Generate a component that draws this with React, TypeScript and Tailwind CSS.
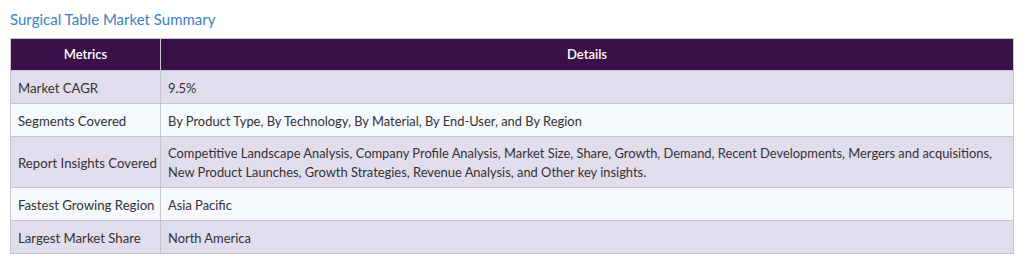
const rows: { metric: string; details: string; tall?: boolean }[] = [
  { metric: "Market CAGR", details: "9.5%" },
  {
    metric: "Segments Covered",
    details: "By Product Type, By Technology, By Material, By End-User, and By Region",
  },
  {
    metric: "Report Insights Covered",
    details:
      "Competitive Landscape Analysis, Company Profile Analysis, Market Size, Share, Growth, Demand, Recent Developments, Mergers and acquisitions, New Product Launches, Growth Strategies, Revenue Analysis, and Other key insights.",
    tall: true,
  },
  { metric: "Fastest Growing Region", details: "Asia Pacific" },
  { metric: "Largest Market Share", details: "North America" },
];

export default function App() {
  return (
    <div
      className="h-[266px] w-[1024px] bg-white px-[10px] pt-[9px]"
      style={{ fontFamily: "Lato, 'Open Sans', sans-serif" }}
    >
      <h2 className="mb-[9px] text-[15px] leading-[20px] text-[#3b80be]">
        Surgical Table Market Summary
      </h2>
      <table className="w-[1004px] table-fixed border-collapse text-[13px] text-[#333]">
        <colgroup>
          <col className="w-[150px]" />
          <col />
        </colgroup>
        <thead>
          <tr className="h-[32px] bg-[#3a1049] text-white">
            <th className="border border-[#c9c3d2] pt-[1px] font-semibold">Metrics</th>
            <th className="border border-[#c9c3d2] pt-[1px] font-semibold">Details</th>
          </tr>
        </thead>
        <tbody>
          {rows.map((r, i) => (
            <tr
              key={r.metric}
              className={`${r.tall ? "h-[51px]" : "h-[33px]"} ${
                i % 2 === 0 ? "bg-[#e1dded]" : "bg-[#f5f8fc]"
              }`}
            >
              <td className="whitespace-nowrap border border-[#c4c4cc] pl-[7px] pt-[2px] text-[13.2px] leading-[19px]">
                {r.metric}
              </td>
              <td className="border border-[#c4c4cc] px-[7px] pt-[2px] text-[12.9px] leading-[19px]">
                {r.details}
              </td>
            </tr>
          ))}
        </tbody>
      </table>
    </div>
  );
}
